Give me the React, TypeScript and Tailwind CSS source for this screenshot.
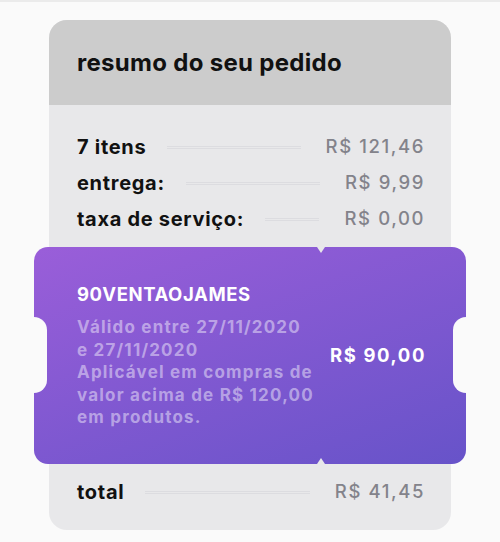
import React from "react";

const font = { fontFamily: "Inter, 'Noto Sans', sans-serif" };

function Row({ label, value }: { label: string; value: string }) {
  return (
    <div className="flex h-[36px] items-center">
      <span className="text-[20px] font-bold tracking-[0.7px] text-[#111] whitespace-nowrap">{label}</span>
      <div className="ml-[21px] mr-[25px] flex-1 h-[3px] border-y border-[#dcdce0]" />
      <span className="text-[18.5px] font-medium tracking-[1.6px] text-[#83838b] whitespace-nowrap -mr-[2px]">{value}</span>
    </div>
  );
}

export default function App() {
  return (
    <div className="min-h-[542px] w-full bg-[#fafafa] border-t-2 border-[#ebebeb] pt-[18px]" style={font}>
      <div className="mx-auto w-[402px] rounded-[18px] bg-[#e8e8ea]">
        <div className="flex h-[85px] items-center rounded-t-[18px] bg-[#cccccc] pl-[28px]">
          <h1 className="text-[24px] font-bold tracking-[0.3px] text-[#111]">resumo do seu pedido</h1>
        </div>
        <div className="pt-[24px] pb-[20px]">
          <div className="px-[28px]">
            <Row label="7 itens" value="R$ 121,46" />
            <Row label="entrega:" value="R$ 9,99" />
            <Row label="taxa de serviço:" value="R$ 0,00" />
          </div>
          <div className="relative -mx-[15px] mt-[10px] h-[217px] rounded-[14px] bg-linear-[160deg] from-[#9a5ed9] to-[#6753c9]">
            <div className="flex h-full items-center justify-between pl-[43px] pr-[40px]">
              <div>
                <div className="text-[18.5px] leading-[24px] font-bold tracking-[0.6px] text-white">90VENTAOJAMES</div>
                <div className="mt-[10px] text-[17px] leading-[22.5px] font-bold tracking-[1.2px] text-white/45">
                  <div className="whitespace-nowrap">Válido entre 27/11/2020</div>
                  <div className="whitespace-nowrap">e 27/11/2020</div>
                  <div className="whitespace-nowrap">Aplicável em compras de</div>
                  <div className="whitespace-nowrap">valor acima de R$ 120,00</div>
                  <div className="whitespace-nowrap">em produtos.</div>
                </div>
              </div>
              <div className="text-[18.5px] font-bold tracking-[1.6px] text-white whitespace-nowrap">R$ 90,00</div>
            </div>
            <div className="absolute left-[-13px] top-[70px] h-[76px] w-[26px] rounded-[13px] bg-[#fafafa]" />
            <div className="absolute right-[-13px] top-[70px] h-[76px] w-[26px] rounded-[13px] bg-[#fafafa]" />
            <div className="absolute left-[283px] top-0 h-0 w-0 border-x-[4px] border-t-[6px] border-x-transparent border-t-[#e8e8ea]" />
            <div className="absolute left-[283px] bottom-0 h-0 w-0 border-x-[4px] border-b-[6px] border-x-transparent border-b-[#e8e8ea]" />
          </div>
          <div className="mt-[10px] px-[28px]">
            <Row label="total" value="R$ 41,45" />
          </div>
        </div>
      </div>
    </div>
  );
}
